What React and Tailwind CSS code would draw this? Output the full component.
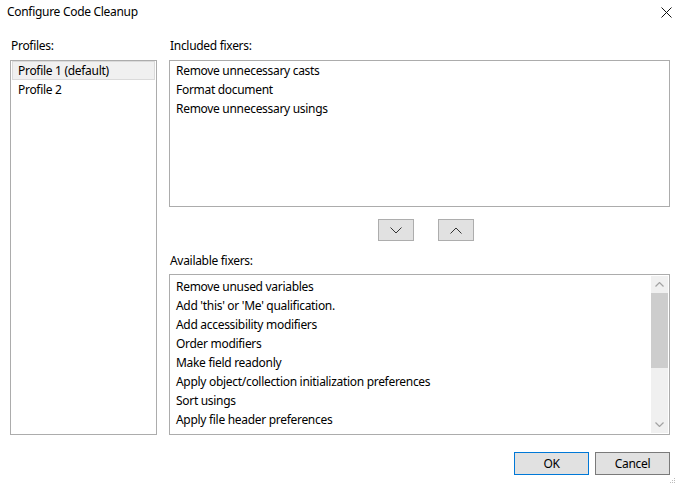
const included = ["Remove unnecessary casts", "Format document", "Remove unnecessary usings"];

const available = [
    "Remove unused variables",
    "Add 'this' or 'Me' qualification.",
    "Add accessibility modifiers",
    "Order modifiers",
    "Make field readonly",
    "Apply object/collection initialization preferences",
    "Sort usings",
    "Apply file header preferences",
];

const Chevron = ({ up }) => (
    <svg width="12" height="7" viewBox="0 0 12 7" className="block">
        <path
            d={up ? "M0.5 6.5 L6 1 L11.5 6.5" : "M0.5 0.5 L6 6 L11.5 0.5"}
            fill="none"
            stroke="#333"
            strokeWidth="1"
        />
    </svg>
);

const SmallArrow = ({ up }) => (
    <svg width="9" height="5" viewBox="0 0 9 5" className="block">
        <path
            d={up ? "M0.5 4.5 L4.5 0.5 L8.5 4.5" : "M0.5 0.5 L4.5 4.5 L8.5 0.5"}
            fill="none"
            stroke="#a3a3a3"
            strokeWidth="1.2"
        />
    </svg>
);

export default function App() {
    return (
        <div
            className="w-[677px] h-[485px] bg-white text-black text-[12px] tracking-[-0.3px] relative overflow-hidden"
            style={{ fontFamily: '"Noto Sans", "Liberation Sans", sans-serif' }}
        >
            {/* Title bar */}
            <div className="h-[24px] flex items-center justify-between pl-[7px] pr-[4px]">
                <span className="text-[12px]">Configure Code Cleanup</span>
                <svg width="11" height="11" viewBox="0 0 11 11" className="mr-[1px] mt-[1px]">
                    <path d="M0.5 0.5 L10.5 10.5 M10.5 0.5 L0.5 10.5" stroke="#111" strokeWidth="1" />
                </svg>
            </div>

            {/* Body */}
            <div className="flex pl-[10px] pt-[14px] gap-[12px]">
                {/* Profiles */}
                <div className="w-[147px] flex flex-col">
                    <div className="h-[16px] leading-[16px] pl-[1px] mb-[6px]">Profiles:</div>
                    <div className="h-[375px] border border-[#acacac] pt-0">
                        <div className="mx-px h-[19px] leading-[18px] pl-[5px] bg-[#f0f0f0] border border-[#dadada]">
                            Profile 1 (default)
                        </div>
                        <div className="h-[19px] leading-[19px] pl-[7px]">Profile 2</div>
                    </div>
                </div>

                {/* Fixers */}
                <div className="w-[501px] flex flex-col">
                    <div className="h-[16px] leading-[16px] pl-[1px] mb-[6px]">Included fixers:</div>
                    <div className="h-[147px] border border-[#acacac]">
                        {included.map((t) => (
                            <div key={t} className="h-[19px] leading-[19px] pl-[6px]">
                                {t}
                            </div>
                        ))}
                    </div>

                    <div className="flex gap-[24px] mt-[12px] pl-[209px]">
                        <button className="w-[36px] h-[22px] bg-[#e1e1e1] border border-[#adadad] flex items-center justify-center">
                            <Chevron />
                        </button>
                        <button className="w-[36px] h-[22px] bg-[#e1e1e1] border border-[#adadad] flex items-center justify-center">
                            <Chevron up />
                        </button>
                    </div>

                    <div className="h-[16px] leading-[16px] pl-[1px] mt-[12px] mb-[5px]">Available fixers:</div>
                    <div className="h-[161px] border border-[#acacac] flex">
                        <div className="flex-1 pt-[2px]">
                            {available.map((t) => (
                                <div key={t} className="h-[19px] leading-[19px] pl-[6px]">
                                    {t}
                                </div>
                            ))}
                        </div>
                        <div className="w-[17px] mr-px my-px bg-[#f0f0f0] flex flex-col">
                            <div className="h-[17px] flex items-center justify-center">
                                <SmallArrow up />
                            </div>
                            <div className="h-[75px] bg-[#cdcdcd]" />
                            <div className="flex-1" />
                            <div className="h-[17px] flex items-center justify-center">
                                <SmallArrow />
                            </div>
                        </div>
                    </div>
                </div>
            </div>

            {/* Footer buttons */}
            <div className="flex justify-end gap-[6px] pr-[7px] mt-[17px]">
                <button className="w-[75px] h-[23px] bg-[#e1e1e1] border border-[#0078d7] text-[12px]">OK</button>
                <button className="w-[75px] h-[23px] bg-[#e1e1e1] border border-[#7a7a7a] text-[12px]">Cancel</button>
            </div>

            {/* Resize grip */}
            <svg width="6" height="6" viewBox="0 0 6 6" className="absolute right-[1px] bottom-[1px]">
                <rect x="4" y="0" width="1" height="1" fill="#bcbcbc" />
                <rect x="2" y="2" width="1" height="1" fill="#bcbcbc" />
                <rect x="4" y="2" width="1" height="1" fill="#bcbcbc" />
                <rect x="0" y="4" width="1" height="1" fill="#bcbcbc" />
                <rect x="2" y="4" width="1" height="1" fill="#bcbcbc" />
                <rect x="4" y="4" width="1" height="1" fill="#bcbcbc" />
            </svg>
        </div>
    );
}
